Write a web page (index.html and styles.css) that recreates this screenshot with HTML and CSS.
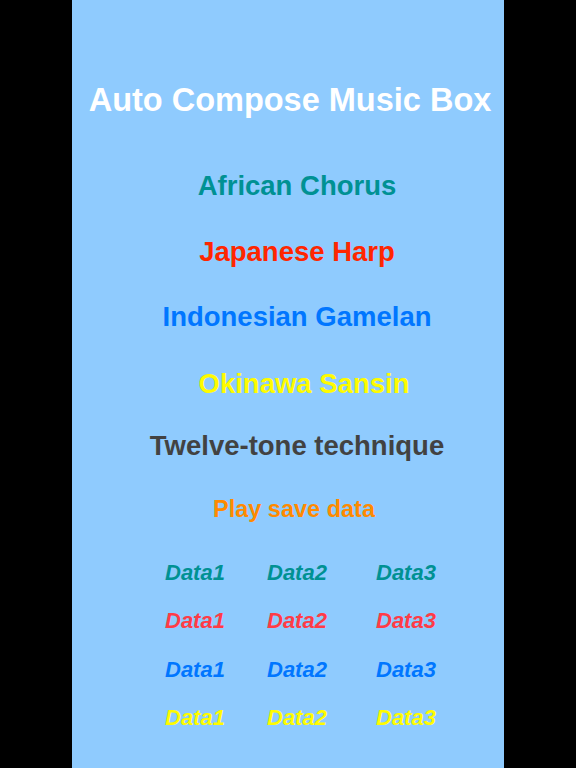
FILE: index.html
```html
<!DOCTYPE html>
<html lang="en">
<head>
<meta charset="utf-8">
<title>Auto Compose Music Box</title>
<link rel="stylesheet" href="styles.css">
</head>
<body>
<main class="panel">
  <h1 class="title">Auto Compose Music Box</h1>
  <nav class="menu">
    <div class="item teal gap-first">African Chorus</div>
    <div class="item red gap-66">Japanese Harp</div>
    <div class="item blue gap-65">Indonesian Gamelan</div>
    <div class="item yellow gap-67 shift-right">Okinawa Sansin</div>
    <div class="item gray gap-62">Twelve-tone technique</div>
    <div class="item orange small gap-63 shift-left">Play save data</div>
  </nav>
  <section class="data-grid">
    <div class="cell teal">Data1</div><div class="cell teal">Data2</div><div class="cell teal">Data3</div>
    <div class="cell pink">Data1</div><div class="cell pink">Data2</div><div class="cell pink">Data3</div>
    <div class="cell blue">Data1</div><div class="cell blue">Data2</div><div class="cell blue">Data3</div>
    <div class="cell yellow">Data1</div><div class="cell yellow">Data2</div><div class="cell yellow">Data3</div>
  </section>
</main>
</body>
</html>
```
FILE: styles.css
```css
html, body {
  margin: 0;
  padding: 0;
  background: #000;
}
body {
  font-family: "Liberation Sans", Arial, Helvetica, sans-serif;
  font-weight: bold;
}
.panel {
  width: 432px;
  height: 768px;
  margin: 0 auto;
  background: #8FCBFE;
  display: flex;
  flex-direction: column;
  overflow: hidden;
}
.title {
  margin: 70px 0 0 4px;
  height: 60px;
  line-height: 60px;
  font-size: 32.5px;
  font-weight: bold;
  color: #fff;
  text-align: center;
  white-space: nowrap;
}
.menu {
  display: flex;
  flex-direction: column;
  padding-left: 18px;
}
.item {
  height: 40px;
  line-height: 40px;
  font-size: 27.5px;
  text-align: center;
  white-space: nowrap;
}
.item.small { font-size: 23.5px; }
.gap-first { margin-top: 36px; }
.gap-66 { margin-top: 26px; }
.gap-65 { margin-top: 25px; }
.gap-67 { margin-top: 27px; }
.gap-62 { margin-top: 22px; }
.gap-63 { margin-top: 23px; }
.shift-right { margin-left: 14px; }
.shift-left { margin-left: -6px; }

.data-grid {
  margin-top: 20px;
  padding-left: 93px;
  display: grid;
  grid-template-columns: 102px 109px auto;
  grid-auto-rows: 48.3px;
}
.cell {
  line-height: 48px;
  font-size: 22px;
  font-style: italic;
  white-space: nowrap;
}
.teal { color: #009193; }
.red { color: #FF2600; }
.pink { color: #FF3B47; }
.blue { color: #0076FF; }
.yellow { color: #FFFB00; }
.gray { color: #424242; }
.orange { color: #FF8A00; }
```
